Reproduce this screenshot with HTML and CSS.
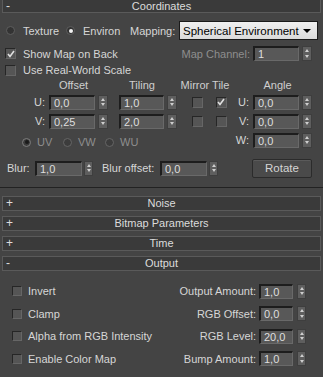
FILE: index.html
```html
<!DOCTYPE html>
<html lang="en">
<head>
    <meta charset="UTF-8">
    <meta name="viewport" content="width=device-width, initial-scale=1.0">
    <title>Coordinates</title>
    <link rel="stylesheet" href="styles.css">
</head>
<body>
    <div class="panel">
        <div class="bar top"><span class="sign">-</span><span class="title">Coordinates</span><span></span></div>

        <div class="row row-map">
            <label class="radio w-texture"><span class="dot"></span>Texture</label>
            <label class="radio w-environ on"><span class="dot"></span>Environ</label>
            <span class="w-mapping">Mapping:</span>
            <div class="select">Spherical Environment<span class="caret"></span></div>
        </div>

        <div class="row row-show">
            <label class="check on"><span class="box"><svg width="8" height="8" viewBox="0 0 8 8"><polyline points="1,4 3,6.5 7,1" fill="none" stroke="#e0e0e0" stroke-width="1.6"/></svg></span>Show Map on Back</label>
            <div class="right">
                <span class="dim">Map Channel:</span>
                <div class="field"><div class="input w46">1</div><div class="spin"></div></div>
            </div>
        </div>

        <div class="row row-real">
            <label class="check"><span class="box"></span>Use Real-World Scale</label>
        </div>

        <div class="table">
            <span class="head c-offset">Offset</span>
            <span class="head c-tiling">Tiling</span>
            <span class="head c-mirror">Mirror Tile</span>
            <span class="head c-angle">Angle</span>

            <span class="lbl">U:</span>
            <div class="field"><div class="input w46">0,0</div><div class="spin"></div></div>
            <span></span>
            <div class="field"><div class="input w46">1,0</div><div class="spin"></div></div>
            <span></span>
            <span class="cell"><span class="box"></span></span>
            <span class="cell"><span class="box"><svg width="8" height="8" viewBox="0 0 8 8"><polyline points="1,4 3,6.5 7,1" fill="none" stroke="#e0e0e0" stroke-width="1.6"/></svg></span></span>
            <span class="lbl">U:</span>
            <div class="field"><div class="input w46">0,0</div><div class="spin"></div></div>

            <span class="lbl">V:</span>
            <div class="field"><div class="input w46">0,25</div><div class="spin"></div></div>
            <span></span>
            <div class="field"><div class="input w46">2,0</div><div class="spin"></div></div>
            <span></span>
            <span class="cell"><span class="box"></span></span>
            <span class="cell"><span class="box"></span></span>
            <span class="lbl">V:</span>
            <div class="field"><div class="input w46">0,0</div><div class="spin"></div></div>

            <div class="uvw">
                <label class="radio dim w-uv on"><span class="dot"></span>UV</label>
                <label class="radio dim w-vw"><span class="dot"></span>VW</label>
                <label class="radio dim"><span class="dot"></span>WU</label>
            </div>
            <span class="lbl">W:</span>
            <div class="field"><div class="input w46">0,0</div><div class="spin"></div></div>
        </div>

        <div class="row row-blur">
            <span class="w-blur">Blur:</span>
            <div class="field tight"><div class="input w47">1,0</div><div class="spin"></div></div>
            <span class="w-bluroff">Blur offset:</span>
            <div class="field tight"><div class="input w47">0,0</div><div class="spin"></div></div>
            <button class="button">Rotate</button>
        </div>

        <div class="sep"></div>

        <div class="bars">
            <div class="bar"><span class="sign">+</span><span class="title">Noise</span><span></span></div>
            <div class="bar"><span class="sign">+</span><span class="title">Bitmap Parameters</span><span></span></div>
            <div class="bar"><span class="sign">+</span><span class="title">Time</span><span></span></div>
            <div class="bar"><span class="sign">-</span><span class="title">Output</span><span></span></div>
        </div>

        <div class="output">
            <div class="out-row">
                <label class="check"><span class="box"></span>Invert</label>
                <div class="right">
                    <span>Output Amount:</span>
                    <div class="field wide"><div class="input w34">1,0</div><div class="spin"></div></div>
                </div>
            </div>
            <div class="out-row">
                <label class="check"><span class="box"></span>Clamp</label>
                <div class="right">
                    <span>RGB Offset:</span>
                    <div class="field wide"><div class="input w34">0,0</div><div class="spin"></div></div>
                </div>
            </div>
            <div class="out-row">
                <label class="check"><span class="box"></span>Alpha from RGB Intensity</label>
                <div class="right">
                    <span>RGB Level:</span>
                    <div class="field wide"><div class="input w34">20,0</div><div class="spin"></div></div>
                </div>
            </div>
            <div class="out-row">
                <label class="check"><span class="box"></span>Enable Color Map</label>
                <div class="right">
                    <span>Bump Amount:</span>
                    <div class="field wide"><div class="input w34">1,0</div><div class="spin"></div></div>
                </div>
            </div>
        </div>
    </div>
</body>
</html>
```

FILE: styles.css
```css
body {
    margin: 0;
    background-color: #444444;
    font-family: "Liberation Sans", Arial, sans-serif;
    font-size: 11px;
    color: #d6d6d6;
}
.panel {
    width: 323px;
    height: 377px;
    overflow: hidden;
}
.dim {
    color: #8e8e8e;
}

/* rollout bars */
.bar {
    display: grid;
    grid-template-columns: 16px 1fr 16px;
    align-items: center;
    height: 13px;
    line-height: 13px;
    margin: 0 2px;
    background-color: #3a3a3a;
    border: 1px solid #5a5a5a;
    color: #dcdcdc;
}
.bar.top {
    height: 12px;
    line-height: 11px;
    border-top: none;
}
.bar .sign {
    padding-left: 3px;
    font-size: 12px;
}
.bar .title {
    text-align: center;
}
.bars {
    display: flex;
    flex-direction: column;
    gap: 5px;
    margin-top: 8px;
}

.row {
    display: flex;
    align-items: center;
}
.right {
    display: flex;
    align-items: center;
    gap: 3px;
    margin-left: auto;
}

/* radio buttons */
.radio {
    display: flex;
    align-items: center;
    gap: 8px;
}
.dot {
    display: flex;
    align-items: center;
    justify-content: center;
    width: 9px;
    height: 9px;
    box-sizing: border-box;
    border-radius: 50%;
    background-color: #333;
    border: 1px solid #5e5e5e;
}
.radio.on .dot::after {
    content: "";
    width: 4px;
    height: 4px;
    border-radius: 50%;
    background-color: #f2f2f2;
}
.radio.dim .dot {
    background-color: #3c3c3c;
    border-color: #666;
}
.radio.dim.on .dot {
    border-color: #7e7e7e;
}
.radio.dim.on .dot::after {
    background-color: #1a1a1a;
}

/* checkboxes */
.check {
    display: flex;
    align-items: center;
    gap: 7px;
}
.box {
    display: flex;
    align-items: center;
    justify-content: center;
    width: 11px;
    height: 11px;
    box-sizing: border-box;
    background-color: #555;
    border-top: 1px solid #262626;
    border-left: 1px solid #262626;
    border-right: 1px solid #666;
    border-bottom: 1px solid #666;
}

/* spinner fields */
.field {
    display: flex;
    align-items: center;
    gap: 3px;
}
.field.tight {
    gap: 2px;
}
.field.wide {
    gap: 4px;
}
.input {
    height: 15px;
    box-sizing: border-box;
    padding-left: 3px;
    line-height: 12px;
    background-color: #585858;
    border-top: 2px solid #1d1d1d;
    border-left: 2px solid #1d1d1d;
    border-right: 1px solid #696969;
    border-bottom: 1px solid #696969;
    color: #dedede;
}
.w34 { width: 34px; }
.w46 { width: 46px; }
.w47 { width: 47px; }
.spin {
    display: flex;
    flex-direction: column;
    justify-content: space-evenly;
    align-items: center;
    width: 10px;
    height: 15px;
    box-sizing: border-box;
    background-color: #5e5e5e;
    border: 1px solid #3e3e3e;
}
.spin::before {
    content: "";
    border-left: 2.5px solid transparent;
    border-right: 2.5px solid transparent;
    border-bottom: 3px solid #cfcfcf;
}
.spin::after {
    content: "";
    border-left: 2.5px solid transparent;
    border-right: 2.5px solid transparent;
    border-top: 3px solid #cfcfcf;
}

/* coordinates rows */
.row-map {
    height: 19px;
    margin-top: 8px;
    padding-left: 6px;
}
.w-texture { width: 60px; }
.w-environ { width: 64px; }
.w-mapping { width: 49px; }
.select {
    display: flex;
    align-items: center;
    justify-content: space-between;
    width: 139px;
    height: 19px;
    box-sizing: border-box;
    padding: 0 6px 0 3px;
    background: linear-gradient(#f0f0f0, #dadada);
    border: 1px solid #1a1a1a;
    color: #000;
    font-size: 11.5px;
}
.caret {
    border-left: 4px solid transparent;
    border-right: 4px solid transparent;
    border-top: 4px solid #000;
}
.row-show {
    height: 15px;
    margin-top: 6px;
    padding: 0 11px 0 5px;
}
.row-real {
    height: 12px;
    margin-top: 3px;
    padding-left: 5px;
}

.table {
    display: grid;
    grid-template-columns: 49px 59px 11px 58px 8px 24px 24px 20px 59px;
    grid-template-rows: 13px 16px 16px 16px;
    row-gap: 3px;
    align-items: center;
    margin-top: 2px;
}
.head {
    text-align: center;
    color: #cfcfcf;
}
.c-offset { grid-column: 2; padding-right: 10px; }
.c-tiling { grid-column: 4; padding-right: 12px; }
.c-mirror { grid-column: 5 / 8; }
.c-angle { grid-column: 9; padding-right: 10px; }
.lbl {
    text-align: right;
    padding-right: 4px;
}
.cell {
    display: flex;
    justify-content: center;
}
.uvw {
    grid-column: 1 / 8;
    display: flex;
    align-self: end;
    padding-left: 22px;
    color: #8e8e8e;
}
.uvw .radio {
    gap: 6px;
}
.w-uv { width: 41px; }
.w-vw { width: 42px; }

.row-blur {
    height: 18px;
    margin-top: 11px;
    padding-left: 7px;
}
.w-blur { width: 28px; }
.row-blur .spin {
    width: 9px;
}
.w-bluroff {
    width: 67px;
    box-sizing: border-box;
    padding-left: 9px;
}
.button {
    width: 60px;
    height: 19px;
    margin-left: 34px;
    padding: 0;
    background-color: #4a4a4a;
    border: 1px solid #2b2b2b;
    border-radius: 2px;
    box-shadow: inset 0 1px 0 #5a5a5a;
    color: #d4d4d4;
    font-family: inherit;
    font-size: 11.5px;
}

.sep {
    height: 0;
    margin-top: 10px;
    border-top: 1px solid #222;
}

/* output rollout */
.output {
    display: flex;
    flex-direction: column;
    gap: 6.5px;
    margin-top: 12px;
    padding: 0 17px 0 12px;
}
.out-row {
    display: flex;
    align-items: center;
    height: 16px;
}
.output .check {
    gap: 6px;
}
.output .box {
    width: 10px;
    height: 10px;
}
.output .spin {
    width: 9px;
}
```
